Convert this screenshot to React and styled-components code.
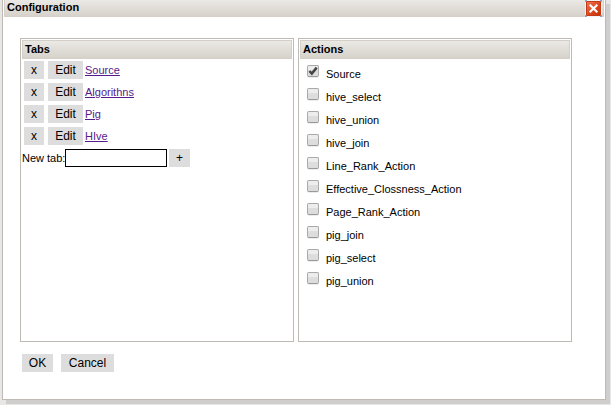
import React, { useState } from 'react';
import styled, { createGlobalStyle } from 'styled-components';

const GlobalStyle = createGlobalStyle`
  * { box-sizing: border-box; }
  body {
    margin: 0;
    background: #e7e7e7;
    color: #000;
    font: 11px/13px "Liberation Sans", Arial, sans-serif;
    overflow: hidden;
  }
`;

const Page = styled.div`
  height: 405px;
  padding-left: 2px;
`;

const Dialog = styled.section`
  display: flex;
  flex-direction: column;
  width: 604px;
  height: 400px;
  padding: 0 1px;
  background: #fff;
  border: solid #bfbab4;
  border-width: 0 1px 1px;
  box-shadow: 4px 4px 0 #cfcecd;
`;

const Bar = styled.header`
  display: flex;
  flex: none;
  justify-content: space-between;
  height: ${(p) => (p.$main ? 17 : 19)}px;
  padding: ${(p) => (p.$main ? '0 1px 0 2px' : '2px 2px 0')};
  border: 1px solid #d4d0c8;
  border-top-width: ${(p) => (p.$main ? 0 : 1)}px;
  background: linear-gradient(#ebe9e5, #d6d2cb);
  font-weight: bold;
`;

const Title = styled.span`
  line-height: 13px;
  padding-top: ${(p) => p.$top || 0}px;
`;

const CloseButton = styled.button`
  width: 17px;
  height: 17px;
  padding: 0;
  border: 0;
  background: none;
  svg { display: block; }
`;

const Panels = styled.div`
  display: flex;
  gap: 4px;
  margin: 21px 0 0 16px;
`;

const Panel = styled.section`
  width: 274px;
  height: 304px;
  padding: 1px;
  border: 1px solid #bfbab4;
`;

const TabList = styled.div`
  display: grid;
  gap: 4px;
  padding: 2px 0 0 2px;
`;

const TabRow = styled.div`
  display: flex;
  align-items: center;
  height: 18px;
`;

const Button = styled.button`
  flex: none;
  width: ${(p) => p.$w}px;
  height: 18px;
  margin: 0 ${(p) => p.$gap || 0}px 0 0;
  padding: 0;
  border: 0;
  background: #ddd;
  color: #000;
  font: 12px/18px "Liberation Sans", Arial, sans-serif;
`;

const TabLink = styled.a`
  color: #551a8b;
  text-decoration: underline;
  margin-top: 1px;
`;

const NewTab = styled.label`
  display: flex;
  align-items: center;
  height: 18px;
  margin-top: 4px;
`;

const NewTabText = styled.span`
  width: 43px;
  white-space: nowrap;
`;

const NameInput = styled.input`
  width: 102px;
  height: 18px;
  margin: 0 2px 0 0;
  padding: 1px 3px;
  border: 1px solid #000;
  border-radius: 0;
  outline: 0;
  font: inherit;
`;

const ActionList = styled.div`
  display: grid;
  grid-auto-rows: 23px;
  padding: 6px 0 0 7px;
`;

const Action = styled.label`
  display: flex;
  gap: 7px;
`;

const Check = styled.span`
  width: 12px;
  height: 12px;
  border: 1px solid #a9a9a9;
  border-bottom-color: #999;
  border-radius: 2px;
  background: linear-gradient(#ededed 38%, #dedede 38%, #dcdcdc);
  box-shadow: 0 1px 0 rgba(0, 0, 0, 0.07);
  svg { display: block; }
`;

const ActionName = styled.span`
  padding-top: 3px;
`;

const Footer = styled.footer`
  display: flex;
  gap: 8px;
  padding: 12px 0 0 18px;
`;

const tabs = ['Source', 'Algorithns', 'Pig', 'HIve'];
const actions = [
  'Source', 'hive_select', 'hive_union', 'hive_join', 'Line_Rank_Action',
  'Effective_Clossness_Action', 'Page_Rank_Action', 'pig_join', 'pig_select', 'pig_union',
];

function CloseIcon() {
  return (
    <svg width="17" height="17" viewBox="0 0 17 17">
      <defs>
        <linearGradient id="close-red" x1="0" y1="0" x2="1" y2="1">
          <stop offset="0" stopColor="#ed7655" />
          <stop offset=".5" stopColor="#e04a20" />
          <stop offset="1" stopColor="#c83008" />
        </linearGradient>
      </defs>
      <rect width="17" height="17" fill="#f2f2f6" />
      <path d="M0 0h2v1H1v1H0zM15 0h2v2h-1V1h-1zM0 15h1v1h1v1H0zM16 15h1v2h-2v-1h1z" fill="#86a5e0" />
      <rect x="1" y="1" width="15" height="15" rx="1" fill="#c13b17" />
      <rect x="2" y="2" width="13" height="13" fill="url(#close-red)" />
      <path d="M4.7 4.7l7.6 7.6M12.3 4.7l-7.6 7.6" stroke="#fff" strokeWidth="2.1" />
    </svg>
  );
}

function CheckMark() {
  return (
    <svg width="10" height="10" viewBox="0 0 10 10">
      <path d="M1.4 5L3.8 7.6L8.7 1.6" fill="none" stroke="#444" strokeWidth="2.5" />
    </svg>
  );
}

export default function App() {
  const [name, setName] = useState('');
  const [selected, setSelected] = useState('Source');
  return (
    <Page>
      <GlobalStyle />
      <Dialog>
        <Bar $main>
          <Title $top={1}>Configuration</Title>
          <CloseButton aria-label="Close"><CloseIcon /></CloseButton>
        </Bar>
        <Panels>
          <Panel>
            <Bar><Title>Tabs</Title></Bar>
            <TabList>
              {tabs.map((tab) => (
                <TabRow key={tab}>
                  <Button $w={20} $gap={4}>x</Button>
                  <Button $w={35} $gap={2}>Edit</Button>
                  <TabLink>{tab}</TabLink>
                </TabRow>
              ))}
            </TabList>
            <NewTab>
              <NewTabText>New tab:</NewTabText>
              <NameInput value={name} onChange={(e) => setName(e.target.value)} />
              <Button $w={21}>+</Button>
            </NewTab>
          </Panel>
          <Panel>
            <Bar><Title>Actions</Title></Bar>
            <ActionList>
              {actions.map((action) => (
                <Action key={action} onClick={() => setSelected(action)}>
                  <Check>{selected === action && <CheckMark />}</Check>
                  <ActionName>{action}</ActionName>
                </Action>
              ))}
            </ActionList>
          </Panel>
        </Panels>
        <Footer>
          <Button $w={31}>OK</Button>
          <Button $w={53}>Cancel</Button>
        </Footer>
      </Dialog>
    </Page>
  );
}
